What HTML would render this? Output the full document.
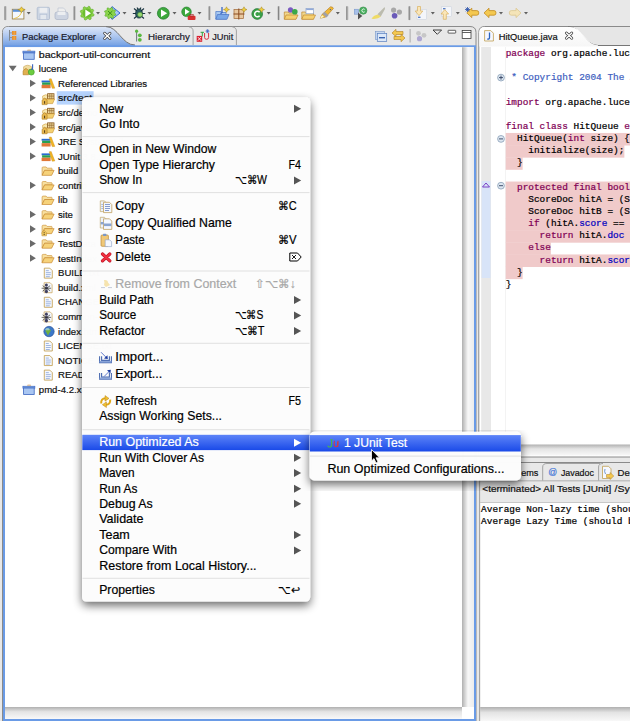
<!DOCTYPE html>
<html><head><meta charset="utf-8"><style>
html,body{margin:0;padding:0;width:630px;height:721px;overflow:hidden;background:#e8e8e8}
svg{display:block}
</style></head><body><svg width="630" height="721" viewBox="0 0 630 721"><defs>

<linearGradient id="gActTab" x1="0" y1="0" x2="0" y2="1">
 <stop offset="0" stop-color="#dde7f8"/><stop offset="0.5" stop-color="#a9c4ee"/><stop offset="1" stop-color="#6c9be2"/>
</linearGradient>
<linearGradient id="gEdTab" x1="0" y1="0" x2="0" y2="1">
 <stop offset="0" stop-color="#ffffff"/><stop offset="1" stop-color="#f6f6f6"/>
</linearGradient>
<linearGradient id="gHScroll" x1="0" y1="0" x2="0" y2="1">
 <stop offset="0" stop-color="#b0b0b0"/><stop offset="0.4" stop-color="#e4e4e4"/><stop offset="1" stop-color="#f8f8f8"/>
</linearGradient>
<linearGradient id="gVScroll" x1="0" y1="0" x2="1" y2="0">
 <stop offset="0" stop-color="#b0b0b0"/><stop offset="0.5" stop-color="#f8f8f8"/><stop offset="1" stop-color="#ececec"/>
</linearGradient>
<linearGradient id="gSel" x1="0" y1="0" x2="0" y2="1">
 <stop offset="0" stop-color="#5d84f8"/><stop offset="1" stop-color="#1a4ae8"/>
</linearGradient>
<filter id="shadow" x="-20%" y="-10%" width="140%" height="130%">
 <feGaussianBlur in="SourceAlpha" stdDeviation="5"/>
 <feOffset dy="4" result="b"/>
 <feComponentTransfer><feFuncA type="linear" slope="0.6"/></feComponentTransfer>
 <feMerge><feMergeNode/><feMergeNode in="SourceGraphic"/></feMerge>
</filter>

</defs>
<rect x="0" y="0" width="630" height="721" fill="#e8e8e8" />
<rect x="4.2" y="6" width="2.4" height="14.2" rx="1" fill="#c4c4c4"/><rect x="4.5" y="6.2" width="1.1" height="13.8" rx="0.5" fill="#858585"/>
<rect x="73.4" y="6" width="2.4" height="14.2" rx="1" fill="#c4c4c4"/><rect x="73.7" y="6.2" width="1.1" height="13.8" rx="0.5" fill="#858585"/>
<rect x="208.4" y="6" width="2.4" height="14.2" rx="1" fill="#c4c4c4"/><rect x="208.70000000000002" y="6.2" width="1.1" height="13.8" rx="0.5" fill="#858585"/>
<rect x="277.6" y="6" width="2.4" height="14.2" rx="1" fill="#c4c4c4"/><rect x="277.90000000000003" y="6.2" width="1.1" height="13.8" rx="0.5" fill="#858585"/>
<rect x="346" y="6" width="2.4" height="14.2" rx="1" fill="#c4c4c4"/><rect x="346.3" y="6.2" width="1.1" height="13.8" rx="0.5" fill="#858585"/>
<rect x="408.4" y="6" width="2.4" height="14.2" rx="1" fill="#c4c4c4"/><rect x="408.7" y="6.2" width="1.1" height="13.8" rx="0.5" fill="#858585"/>
<path d="M26.7 12 h4 l-2 2.6 z" fill="#606060"/>
<path d="M96 12 h4 l-2 2.6 z" fill="#606060"/>
<path d="M122.5 12 h4 l-2 2.6 z" fill="#606060"/>
<path d="M147.5 12 h4 l-2 2.6 z" fill="#606060"/>
<path d="M172.5 12 h4 l-2 2.6 z" fill="#606060"/>
<path d="M197.5 12 h4 l-2 2.6 z" fill="#606060"/>
<path d="M266.7 12 h4 l-2 2.6 z" fill="#606060"/>
<path d="M335.8 12 h4 l-2 2.6 z" fill="#606060"/>
<path d="M430.8 12 h4 l-2 2.6 z" fill="#606060"/>
<path d="M455.8 12 h4 l-2 2.6 z" fill="#606060"/>
<path d="M499 12 h4 l-2 2.6 z" fill="#606060"/>
<path d="M524 12 h4 l-2 2.6 z" fill="#606060"/>
<g>
<rect x="12.3" y="9.3" width="11.6" height="9.7" fill="#f4f8fc" stroke="#a08850" stroke-width="0.9"/>
<rect x="12.8" y="9.6" width="10.6" height="2.2" fill="#5a90d8"/>
<path d="M14 18.6 Q21 17 21.5 11" fill="none" stroke="#e8c040" stroke-width="0.9"/>
<path d="M21.5 6.8 L23 9 L25.2 9.6 L23 10.4 L21.5 12.6 L20 10.4 L17.8 9.6 L20 9 Z" fill="#f0d040" stroke="#a08020" stroke-width="0.5"/>
</g>
<g opacity="0.55">
<rect x="37.2" y="7.3" width="12.3" height="12.3" rx="1.2" fill="#b8c8e0" stroke="#7890b8" stroke-width="0.8"/>
<rect x="39.5" y="7.8" width="7.8" height="5" fill="#f0f4fa"/>
<rect x="40" y="14.5" width="6.8" height="5" fill="#e0e8f4" stroke="#8098c0" stroke-width="0.5"/>
</g>
<g opacity="0.55">
<path d="M58 12 V8 H63.5 L65.5 10 V12" fill="#f4f4f4" stroke="#9aa8c0" stroke-width="0.7"/>
<rect x="55" y="12" width="13" height="7.5" rx="2" fill="#b8c4dc" stroke="#8090b0" stroke-width="0.8"/>
<rect x="57.5" y="12" width="8" height="3" fill="#f0f4fa"/>
</g>
<g>
<path d="M94.06,14.59 L93.66,15.90 L91.84,16.33 L91.15,17.17 L91.07,19.03 L89.86,19.68 L88.27,18.70 L87.18,18.80 L85.81,20.06 L84.50,19.66 L84.07,17.84 L83.23,17.15 L81.37,17.07 L80.72,15.86 L81.70,14.27 L81.60,13.18 L80.34,11.81 L80.74,10.50 L82.56,10.07 L83.25,9.23 L83.33,7.37 L84.54,6.72 L86.13,7.70 L87.22,7.60 L88.59,6.34 L89.90,6.74 L90.33,8.56 L91.17,9.25 L93.03,9.33 L93.68,10.54 L92.70,12.13 L92.80,13.22 Z" fill="#8cd448" stroke="#5aa828" stroke-width="0.6" stroke-linejoin="round"/>
<circle cx="87.2" cy="13.2" r="4.6" fill="#6cbc30"/>
<path d="M85.3 9.5 L91 13.2 L85.3 16.9 Z" fill="#ffffff"/>
</g>
<g>
<path d="M112 6.6 L120 13 L112 19.4 L108 13 Z" fill="#a8c8f8" stroke="#3a6ad0" stroke-width="1"/>
<path d="M115.88,14.25 L115.55,15.34 L113.93,15.61 L113.37,16.29 L113.40,17.93 L112.40,18.47 L111.06,17.52 L110.18,17.60 L109.05,18.78 L107.96,18.45 L107.69,16.83 L107.01,16.27 L105.37,16.30 L104.83,15.30 L105.78,13.96 L105.70,13.08 L104.52,11.95 L104.85,10.86 L106.47,10.59 L107.03,9.91 L107.00,8.27 L108.00,7.73 L109.34,8.68 L110.22,8.60 L111.35,7.42 L112.44,7.75 L112.71,9.37 L113.39,9.93 L115.03,9.90 L115.57,10.90 L114.62,12.24 L114.70,13.12 Z" fill="#8ad44a" stroke="#4aa020" stroke-width="0.5" stroke-linejoin="round"/>
<path d="M108 11 L112.4 15.2 M112.4 11 L108 15.2" stroke="#3a9018" stroke-width="1"/>
</g>
<g>
<path d="M134 8.5 L137 11 M144 8.5 L141 11 M132.8 13.5 H136 M145.2 13.5 H142 M134 18.5 L137 16 M144 18.5 L141 16 M137 7.5 L138.2 9.5 M141 7.5 L139.8 9.5" stroke="#1a3440" stroke-width="1.1"/>
<ellipse cx="139" cy="13.5" rx="3.4" ry="4.6" fill="#2a5a60" stroke="#102830" stroke-width="0.7"/>
<circle cx="140" cy="14.6" r="2.4" fill="#98d870" stroke="#4a8a30" stroke-width="0.5"/>
</g>
<g>
<circle cx="163.3" cy="13.3" r="5.9" fill="#3ca83c" stroke="#1e7a2a" stroke-width="0.7"/>
<path d="M161 9.6 L167.2 13.3 L161 17 Z" fill="#ffffff"/>
</g>
<g>
<circle cx="186.5" cy="11.8" r="4.8" fill="#3ca83c" stroke="#1e7a2a" stroke-width="0.6"/>
<path d="M185 8.8 L189.6 11.8 L185 14.8 Z" fill="#ffffff"/>
<rect x="187.7" y="15.8" width="7.8" height="4.2" rx="1" fill="#d83030"/>
<rect x="190" y="14.6" width="3.2" height="1.4" fill="none" stroke="#a02020" stroke-width="0.6"/>
</g>
<g>
<path d="M215.8 11.5 H221 L222 12.5 H226 V19 H215.8 Z" fill="#a8c8f0" stroke="#4a78c8" stroke-width="0.7"/>
<path d="M217.5 14.5 H229 L227 19.3 H215.8 Z" fill="#7aa8e8" stroke="#3a64c0" stroke-width="0.6"/>
<path d="M222 7 V12.2 Q222 13.5 220.3 13.2" fill="none" stroke="#2a5ac0" stroke-width="1.2"/>
<path d="M226.5 6.8 L227.5 8.8 L229.5 9.6 L227.5 10.4 L226.5 12.4 L225.5 10.4 L223.5 9.6 L225.5 8.8 Z" fill="#f0d040" stroke="#a08020" stroke-width="0.5"/>
</g>
<g>
<rect x="234" y="9.4" width="9.6" height="9.2" fill="#e8c8a0" stroke="#a06838" stroke-width="0.7"/>
<path d="M238.8 8.5 V19.5 M233.5 14 H244.5" stroke="#8a4a20" stroke-width="1"/>
<path d="M244 6.8 L245 8.8 L247 9.6 L245 10.4 L244 12.4 L243 10.4 L241 9.6 L243 8.8 Z" fill="#f0d040" stroke="#a08020" stroke-width="0.5"/>
</g>
<g>
<circle cx="257.2" cy="14" r="5.4" fill="#3aa048" stroke="#1e7030" stroke-width="0.6"/>
<path d="M259.6 12.2 A2.8 2.8 0 1 0 259.6 15.8" fill="none" stroke="#ffffff" stroke-width="1.5"/>
<path d="M261.5 6.8 L262.5 8.8 L264.5 9.6 L262.5 10.4 L261.5 12.4 L260.5 10.4 L258.5 9.6 L260.5 8.8 Z" fill="#f0d040" stroke="#a08020" stroke-width="0.5"/>
</g>
<g>
<path d="M284.3 12 H288 L289 13 H296 V19 H284.3 Z" fill="#f0d890" stroke="#c08a30" stroke-width="0.7"/>
<path d="M286 15 H298 L296 19.3 H284.3 Z" fill="#f6d070" stroke="#c08a30" stroke-width="0.7"/>
<circle cx="290.5" cy="9.9" r="2.6" fill="#7a5ac0"/>
<circle cx="294.8" cy="11.8" r="2.8" fill="#3aa848"/>
</g>
<g>
<path d="M301.8 12 H305.5 L306.5 13 H313.5 V19 H301.8 Z" fill="#f0d890" stroke="#c08a30" stroke-width="0.7"/>
<rect x="306" y="8.3" width="7.5" height="5.5" fill="#ffffff" stroke="#8098c0" stroke-width="0.6"/>
<rect x="306.2" y="8.5" width="7.1" height="1.6" fill="#90a8d8"/>
<path d="M303.5 15 H315.5 L313.5 19.3 H301.8 Z" fill="#f6d070" stroke="#c08a30" stroke-width="0.7"/>
</g>
<g>
<path d="M320.3 18.2 L322 14.5 L330.5 6.8 Q333 6.6 333.4 8.5 L325.8 17 Z" fill="#f0b838" stroke="#b07820" stroke-width="0.6"/>
<path d="M322.5 14 L326.3 17.6 L328.5 15.4 L324.7 11.8 Z" fill="#a0a0a8"/>
<path d="M320 18.6 L322 15 L324 17 Z" fill="#fff8c0"/>
<circle cx="330.4" cy="9.6" r="0.7" fill="#4060a0"/>
</g>
<g>
<rect x="354.3" y="9.2" width="4.3" height="5" fill="#a8c0e8" stroke="#7090c8" stroke-width="0.5"/>
<path d="M358 12.6 L362.3 16 L358 19.4 Z" fill="#505050"/>
<circle cx="363.2" cy="10.6" r="3.7" fill="#4ab060" stroke="#2a8040" stroke-width="0.5"/>
<path d="M364.6 9.4 A1.6 1.6 0 1 0 364.6 11.8" fill="none" stroke="#fff" stroke-width="0.9"/>
</g>
<g opacity="0.8">
<path d="M371.5 18.8 Q374 15 378 14.5 L381 16.5 Q378 19.5 371.5 18.8 Z" fill="#f0d848"/>
<path d="M377.5 14.2 L384.6 7 L385 9 L380.8 16.6 Z" fill="#b0b0a0"/>
</g>
<g>
<circle cx="393.6" cy="10.1" r="2.6" fill="#a8a8a8"/>
<circle cx="399.4" cy="12.1" r="2.6" fill="#a8a8a8"/>
<circle cx="394.6" cy="15.8" r="2.8" fill="#6a5ab8"/>
</g>
<g>
<rect x="417" y="9.5" width="9.6" height="9.8" fill="#f4f6fa" stroke="#c8d0dc" stroke-width="0.5"/>
<rect x="418" y="16.6" width="2.5" height="1.4" fill="#5a80c8"/>
<path d="M417.5 6.5 H420.5 V11 H422.8 L419 15.7 L415.2 11 H417.5 Z" fill="#fae6b8" stroke="#d8b060" stroke-width="0.7"/>
</g>
<g>
<rect x="441.5" y="6.8" width="10" height="9.8" fill="#f4f6fa" stroke="#c8d0dc" stroke-width="0.5"/>
<rect x="443" y="8" width="2.5" height="1.4" fill="#5a80c8"/>
<path d="M443.3 19.3 H446.3 V14 H448.6 L444.8 9.6 L441 14 H443.3 Z" fill="#fae6b8" stroke="#d8b060" stroke-width="0.7"/>
</g>
<path d="M466.8 12.9 L471.8 8.2 V10.6 H476.8 Q478.8 10.6 478.8 12.9 Q478.8 15.2 476.8 15.2 H471.8 V17.6 Z" fill="#f4c850" stroke="#c08a20" stroke-width="0.8" opacity="1.0"/>
<path d="M467.5 7 V12 M465 9.5 H470 M465.7 7.7 L469.3 11.3 M469.3 7.7 L465.7 11.3" stroke="#2a50a8" stroke-width="0.8"/>
<path d="M484 12.9 L489 8.2 V10.6 H494 Q496 10.6 496 12.9 Q496 15.2 494 15.2 H489 V17.6 Z" fill="#f4c850" stroke="#c08a20" stroke-width="0.8" opacity="1.0"/>
<path d="M521 12.9 L516 8.2 V10.6 H511.3 Q509.3 10.6 509.3 12.9 Q509.3 15.2 511.3 15.2 H516 V17.6 Z" fill="#f4e4b8" stroke="#dcc890" stroke-width="0.8"/>
<path d="M2.5 721 V32.5 Q2.5 26.5 8.5 26.5 H470 Q476 26.5 476 32.5 V721" fill="#e8e8e8" stroke="#8a8a8a" stroke-width="1"/>
<path d="M188.9 26.8 Q193.1 27.5 193.1 31 V45" fill="none" stroke="#9a9a9a" stroke-width="0.9"/>
<path d="M232.2 26.8 Q236.4 27.5 236.4 31 V45" fill="none" stroke="#9a9a9a" stroke-width="0.9"/>
<path d="M3 47 V32.5 Q3 27 8.5 27 H108 C118 27 122 45 135 45 V47 Z" fill="url(#gActTab)"/>
<path d="M106 26.6 C118 26.6 122 45 135 45" fill="none" stroke="#767676" stroke-width="1"/>
<rect x="3" y="45.3" width="473" height="1.9" fill="#6a9be6" />
<rect x="3" y="47" width="2" height="674" fill="#6a9be6" />
<rect x="474" y="47" width="2" height="674" fill="#6a9be6" />
<rect x="3" y="718.8" width="473" height="2.2" fill="#6a9be6" />
<rect x="5" y="47.2" width="469" height="671.6" fill="#ffffff" />
<rect x="462" y="47.2" width="12" height="659.8" fill="url(#gVScroll)" />
<rect x="5" y="707" width="457" height="11.8" fill="url(#gHScroll)" />
<rect x="462" y="707" width="12" height="11.8" fill="#ffffff" />
<text x="22" y="39.6" font-family="Liberation Sans" font-size="9.6" fill="#1a1a2a" stroke="#1a1a2a" stroke-width="0.2" textLength="74" lengthAdjust="spacingAndGlyphs" >Package Explorer</text>
<text x="148" y="39.8" font-family="Liberation Sans" font-size="9.6" fill="#1a1a2a" stroke="#1a1a2a" stroke-width="0.2" textLength="42" lengthAdjust="spacingAndGlyphs" >Hierarchy</text>
<text x="212.2" y="39.8" font-family="Liberation Sans" font-size="9.6" fill="#1a1a2a" stroke="#1a1a2a" stroke-width="0.2" textLength="21" lengthAdjust="spacingAndGlyphs" >JUnit</text>
<g>
<rect x="375.3" y="31.6" width="9.4" height="8" fill="#c8d8f0" stroke="#7a98c8" stroke-width="0.6"/>
<rect x="377.3" y="33.4" width="9.4" height="8" fill="#dce8f8" stroke="#5a80c0" stroke-width="0.7"/>
<rect x="379" y="37" width="6" height="1.4" fill="#3a64b0"/>
<path d="M392 33 L396 29.3 V31.5 H403 V34.5 H396 V36.7 Z" fill="#f4c850" stroke="#b08020" stroke-width="0.6"/>
<path d="M405 38 L401 34.3 V36.5 H394 V39.5 H401 V41.7 Z" fill="#f4c850" stroke="#b08020" stroke-width="0.6"/>
<rect x="409.6" y="29" width="1" height="13.5" fill="#a8a8a8"/>
<g opacity="0.45"><circle cx="418.5" cy="33.3" r="2.4" fill="#a0a0a0"/><circle cx="424" cy="35.3" r="2.4" fill="#a0a0a0"/><circle cx="419.5" cy="38.7" r="2.6" fill="#6a5ab8"/></g>
<path d="M433 30 H441.6 L437.3 34.3 Z" fill="none" stroke="#303030" stroke-width="0.9"/>
<rect x="448.1" y="30.3" width="7.6" height="2.8" rx="0.4" fill="#fff" stroke="#3a3a3a" stroke-width="0.8"/>
<rect x="462.2" y="30.4" width="8.8" height="8" fill="#fff" stroke="#3a3a3a" stroke-width="0.8"/>
<rect x="462.2" y="32" width="8.8" height="0.8" fill="#3a3a3a"/>
</g>
<rect x="56.8" y="91.2" width="36.8" height="13.4" fill="#b6d4fe" />
<g transform="translate(22.6,49.5)">
<rect x="4.5" y="0" width="4" height="2" rx="1" fill="#e8c8a0"/>
<rect x="0.3" y="1.6" width="12" height="2" fill="#7aa2e0" stroke="#3a64c0" stroke-width="0.6"/>
<rect x="1" y="3.4" width="10.6" height="6.4" fill="#a9c6f2" stroke="#3a64c0" stroke-width="0.8"/>
</g>
<text x="38.8" y="57.7" font-family="Liberation Sans" font-size="9.6" fill="#111" stroke="#111" stroke-width="0.2" textLength="111.4" lengthAdjust="spacingAndGlyphs" >backport-util-concurrent</text>
<path d="M8.7 65.67000000000002 L16.7 65.67000000000002 L12.7 71.27000000000001 Z" fill="#6a6a6a"/>
<g transform="translate(22.6,63.77000000000001)">
<path d="M1 3 Q5 0 9 3 L9 6 L1 6 Z" fill="#f0dca0" stroke="#c8a050" stroke-width="0.6"/>
<path d="M0.5 7 L3.5 4.5 L6 7 L6 11 L0.5 11 Z" fill="#e0b050" stroke="#b07820" stroke-width="0.6"/>
<circle cx="8.7" cy="8.3" r="3" fill="#6ccc40" stroke="#3c9a20" stroke-width="0.6"/>
<path d="M10 0.5 V4.5 Q10 6 8.5 5.5" fill="none" stroke="#3a64c0" stroke-width="1.1"/>
</g>
<text x="38.8" y="72.27000000000001" font-family="Liberation Sans" font-size="9.6" fill="#111" stroke="#111" stroke-width="0.2" >lucene</text>
<path d="M30.0 79.64 L35.9 83.29 L30.0 86.94 Z" fill="#6a6a6a"/>
<g transform="translate(41.6,78.74000000000001)">
<rect x="0" y="1.8" width="8.5" height="1.9" fill="#2a6ad0"/>
<rect x="0.5" y="3.7" width="8.5" height="2.4" fill="#28a050"/>
<rect x="0" y="6.1" width="9" height="3.4" fill="#e07838"/>
<path d="M7.6 0.2 L9.6 0 L13.2 9.4 L10.6 9.6 Z" fill="#f2b424" stroke="#c88a10" stroke-width="0.4"/>
</g>
<text x="58.0" y="86.84" font-family="Liberation Sans" font-size="9.6" fill="#111" stroke="#111" stroke-width="0.2" >Referenced Libraries</text>
<path d="M30.0 94.21 L35.9 97.86 L30.0 101.50999999999999 Z" fill="#6a6a6a"/>
<g transform="translate(41.6,93.11)">
<path d="M1 3 Q4 0.5 7 2.5 L7 5.5 L1 5.5 Z" fill="#f8e8b0" stroke="#d0a040" stroke-width="0.6"/>
<rect x="6" y="0.6" width="6.4" height="5.2" fill="#f0dca0" stroke="#8a5a20" stroke-width="0.8"/><path d="M8.2 0.6 V5.8 M10.2 0.6 V5.8 M6 3 H12.4" stroke="#8a5a20" stroke-width="0.6"/>
<path d="M2 6 L13 6 L11 10.5 L1 10.5 Z" fill="#f4d070" stroke="#c89030" stroke-width="0.6"/>
<path d="M0.5 7 L3 5 L5.5 7 L5.5 11.5 L0.5 11.5 Z" fill="#e8b850" stroke="#b08020" stroke-width="0.6"/>
<rect x="2.6" y="8" width="0.9" height="2.6" fill="#3a2a10"/>
</g>
<text x="58.0" y="101.41" font-family="Liberation Sans" font-size="9.6" fill="#111" stroke="#111" stroke-width="0.2" textLength="34.2" lengthAdjust="spacingAndGlyphs" >src/test</text>
<path d="M30.0 108.78 L35.9 112.43 L30.0 116.08 Z" fill="#6a6a6a"/>
<g transform="translate(41.6,107.68)">
<path d="M1 3 Q4 0.5 7 2.5 L7 5.5 L1 5.5 Z" fill="#f8e8b0" stroke="#d0a040" stroke-width="0.6"/>
<rect x="6" y="0.6" width="6.4" height="5.2" fill="#f0dca0" stroke="#8a5a20" stroke-width="0.8"/><path d="M8.2 0.6 V5.8 M10.2 0.6 V5.8 M6 3 H12.4" stroke="#8a5a20" stroke-width="0.6"/>
<path d="M2 6 L13 6 L11 10.5 L1 10.5 Z" fill="#f4d070" stroke="#c89030" stroke-width="0.6"/>
<path d="M0.5 7 L3 5 L5.5 7 L5.5 11.5 L0.5 11.5 Z" fill="#e8b850" stroke="#b08020" stroke-width="0.6"/>
<rect x="2.6" y="8" width="0.9" height="2.6" fill="#3a2a10"/>
</g>
<text x="58.0" y="115.98" font-family="Liberation Sans" font-size="9.6" fill="#111" stroke="#111" stroke-width="0.2" >src/demo</text>
<path d="M30.0 123.35000000000001 L35.9 127.00000000000001 L30.0 130.65 Z" fill="#6a6a6a"/>
<g transform="translate(41.6,122.25000000000001)">
<path d="M1 3 Q4 0.5 7 2.5 L7 5.5 L1 5.5 Z" fill="#f8e8b0" stroke="#d0a040" stroke-width="0.6"/>
<rect x="6" y="0.6" width="6.4" height="5.2" fill="#f0dca0" stroke="#8a5a20" stroke-width="0.8"/><path d="M8.2 0.6 V5.8 M10.2 0.6 V5.8 M6 3 H12.4" stroke="#8a5a20" stroke-width="0.6"/>
<path d="M2 6 L13 6 L11 10.5 L1 10.5 Z" fill="#f4d070" stroke="#c89030" stroke-width="0.6"/>
<path d="M0.5 7 L3 5 L5.5 7 L5.5 11.5 L0.5 11.5 Z" fill="#e8b850" stroke="#b08020" stroke-width="0.6"/>
<rect x="2.6" y="8" width="0.9" height="2.6" fill="#3a2a10"/>
</g>
<text x="58.0" y="130.55" font-family="Liberation Sans" font-size="9.6" fill="#111" stroke="#111" stroke-width="0.2" >src/java</text>
<path d="M30.0 137.92000000000002 L35.9 141.57000000000002 L30.0 145.22000000000003 Z" fill="#6a6a6a"/>
<g transform="translate(41.6,137.02)">
<rect x="0" y="1.8" width="8.5" height="1.9" fill="#2a6ad0"/>
<rect x="0.5" y="3.7" width="8.5" height="2.4" fill="#28a050"/>
<rect x="0" y="6.1" width="9" height="3.4" fill="#e07838"/>
<path d="M7.6 0.2 L9.6 0 L13.2 9.4 L10.6 9.6 Z" fill="#f2b424" stroke="#c88a10" stroke-width="0.4"/>
</g>
<text x="58.0" y="145.12" font-family="Liberation Sans" font-size="9.6" fill="#111" stroke="#111" stroke-width="0.2" >JRE System Library</text>
<path d="M30.0 152.49 L35.9 156.14000000000001 L30.0 159.79000000000002 Z" fill="#6a6a6a"/>
<g transform="translate(41.6,151.59)">
<rect x="0" y="1.8" width="8.5" height="1.9" fill="#2a6ad0"/>
<rect x="0.5" y="3.7" width="8.5" height="2.4" fill="#28a050"/>
<rect x="0" y="6.1" width="9" height="3.4" fill="#e07838"/>
<path d="M7.6 0.2 L9.6 0 L13.2 9.4 L10.6 9.6 Z" fill="#f2b424" stroke="#c88a10" stroke-width="0.4"/>
</g>
<text x="58.0" y="159.69" font-family="Liberation Sans" font-size="9.6" fill="#111" stroke="#111" stroke-width="0.2" >JUnit 3.8.1</text>
<g transform="translate(41.6,166.35999999999999)">
<path d="M0.5 1.5 Q0.5 0.6 1.5 0.6 L4.5 0.6 L5.5 1.8 L10 1.8 Q10.5 1.8 10.5 2.5 L10.5 4 L3 4 L0.5 8.8 Z" fill="#f8e0a0" stroke="#d09840" stroke-width="0.7"/>
<path d="M3 4 L12.5 4 L10 9 L0.5 9 Z" fill="#f6d27a" stroke="#c88a30" stroke-width="0.7"/>
</g>
<text x="58.0" y="174.26" font-family="Liberation Sans" font-size="9.6" fill="#111" stroke="#111" stroke-width="0.2" >build</text>
<path d="M30.0 181.63 L35.9 185.28 L30.0 188.93 Z" fill="#6a6a6a"/>
<g transform="translate(41.6,180.92999999999998)">
<path d="M0.5 1.5 Q0.5 0.6 1.5 0.6 L4.5 0.6 L5.5 1.8 L10 1.8 Q10.5 1.8 10.5 2.5 L10.5 4 L3 4 L0.5 8.8 Z" fill="#f8e0a0" stroke="#d09840" stroke-width="0.7"/>
<path d="M3 4 L12.5 4 L10 9 L0.5 9 Z" fill="#f6d27a" stroke="#c88a30" stroke-width="0.7"/>
</g>
<text x="58.0" y="188.82999999999998" font-family="Liberation Sans" font-size="9.6" fill="#111" stroke="#111" stroke-width="0.2" >contrib</text>
<g transform="translate(41.6,195.49999999999997)">
<path d="M0.5 1.5 Q0.5 0.6 1.5 0.6 L4.5 0.6 L5.5 1.8 L10 1.8 Q10.5 1.8 10.5 2.5 L10.5 4 L3 4 L0.5 8.8 Z" fill="#f8e0a0" stroke="#d09840" stroke-width="0.7"/>
<path d="M3 4 L12.5 4 L10 9 L0.5 9 Z" fill="#f6d27a" stroke="#c88a30" stroke-width="0.7"/>
</g>
<text x="58.0" y="203.39999999999998" font-family="Liberation Sans" font-size="9.6" fill="#111" stroke="#111" stroke-width="0.2" >lib</text>
<path d="M30.0 210.77000000000004 L35.9 214.42000000000004 L30.0 218.07000000000005 Z" fill="#6a6a6a"/>
<g transform="translate(41.6,210.07000000000002)">
<path d="M0.5 1.5 Q0.5 0.6 1.5 0.6 L4.5 0.6 L5.5 1.8 L10 1.8 Q10.5 1.8 10.5 2.5 L10.5 4 L3 4 L0.5 8.8 Z" fill="#f8e0a0" stroke="#d09840" stroke-width="0.7"/>
<path d="M3 4 L12.5 4 L10 9 L0.5 9 Z" fill="#f6d27a" stroke="#c88a30" stroke-width="0.7"/>
</g>
<text x="58.0" y="217.97000000000003" font-family="Liberation Sans" font-size="9.6" fill="#111" stroke="#111" stroke-width="0.2" >site</text>
<path d="M30.0 225.34000000000003 L35.9 228.99000000000004 L30.0 232.64000000000004 Z" fill="#6a6a6a"/>
<g transform="translate(41.6,224.64000000000001)">
<path d="M0.5 1.5 Q0.5 0.6 1.5 0.6 L4.5 0.6 L5.5 1.8 L10 1.8 Q10.5 1.8 10.5 2.5 L10.5 4 L3 4 L0.5 8.8 Z" fill="#f8e0a0" stroke="#d09840" stroke-width="0.7"/>
<path d="M3 4 L12.5 4 L10 9 L0.5 9 Z" fill="#f6d27a" stroke="#c88a30" stroke-width="0.7"/>
</g><g transform="translate(41.6,224.64000000000001)">
<path d="M0.3 8 L2.6 5.6 L4.9 8 L4.9 11.2 L0.3 11.2 Z" fill="#f0c860" stroke="#b88a30" stroke-width="0.5"/>
<rect x="2.1" y="7.6" width="0.9" height="1" fill="#3a2a10"/><rect x="2.1" y="9.4" width="0.9" height="1" fill="#3a2a10"/>
</g>
<text x="58.0" y="232.54000000000002" font-family="Liberation Sans" font-size="9.6" fill="#111" stroke="#111" stroke-width="0.2" >src</text>
<path d="M30.0 239.91000000000003 L35.9 243.56000000000003 L30.0 247.21000000000004 Z" fill="#6a6a6a"/>
<g transform="translate(41.6,239.21)">
<path d="M0.5 1.5 Q0.5 0.6 1.5 0.6 L4.5 0.6 L5.5 1.8 L10 1.8 Q10.5 1.8 10.5 2.5 L10.5 4 L3 4 L0.5 8.8 Z" fill="#f8e0a0" stroke="#d09840" stroke-width="0.7"/>
<path d="M3 4 L12.5 4 L10 9 L0.5 9 Z" fill="#f6d27a" stroke="#c88a30" stroke-width="0.7"/>
</g>
<text x="58.0" y="247.11" font-family="Liberation Sans" font-size="9.6" fill="#111" stroke="#111" stroke-width="0.2" >TestData</text>
<path d="M30.0 254.48000000000002 L35.9 258.13 L30.0 261.78000000000003 Z" fill="#6a6a6a"/>
<g transform="translate(41.6,253.78)">
<path d="M0.5 1.5 Q0.5 0.6 1.5 0.6 L4.5 0.6 L5.5 1.8 L10 1.8 Q10.5 1.8 10.5 2.5 L10.5 4 L3 4 L0.5 8.8 Z" fill="#f8e0a0" stroke="#d09840" stroke-width="0.7"/>
<path d="M3 4 L12.5 4 L10 9 L0.5 9 Z" fill="#f6d27a" stroke="#c88a30" stroke-width="0.7"/>
</g>
<text x="58.0" y="261.68" font-family="Liberation Sans" font-size="9.6" fill="#111" stroke="#111" stroke-width="0.2" >testIndex</text>
<g transform="translate(43.800000000000004,267.65)">
<path d="M0.5 0.5 H6 L8.5 3 V10.5 H0.5 Z" fill="#f4f8ff" stroke="#c09a48" stroke-width="0.8"/>
<path d="M2 3 H5 M2 5 H7 M2 7 H7 M2 9 H6" stroke="#8aa4d8" stroke-width="0.8"/>
</g>
<text x="58.0" y="276.25" font-family="Liberation Sans" font-size="9.6" fill="#111" stroke="#111" stroke-width="0.2" >BUILD.txt</text>
<g transform="translate(41.6,282.21999999999997)">
<path d="M2.5 0.5 H8.5 L10.5 2.5 V10.5 H2.5 Z" fill="#f4f8ff" stroke="#c8a050" stroke-width="0.7"/>
<ellipse cx="4.8" cy="2.8" rx="1.5" ry="1.6" fill="#404060"/>
<ellipse cx="4.8" cy="6" rx="1.4" ry="1.6" fill="#505070"/>
<ellipse cx="4.8" cy="9.3" rx="1.6" ry="1.8" fill="#404060"/>
<path d="M0 6 H9.5 M1 3.5 L8.5 8.5 M1 9 L8.5 3.5" stroke="#303030" stroke-width="0.7"/>
</g>
<text x="58.0" y="290.82" font-family="Liberation Sans" font-size="9.6" fill="#111" stroke="#111" stroke-width="0.2" >build.xml</text>
<g transform="translate(43.800000000000004,296.78999999999996)">
<path d="M0.5 0.5 H6 L8.5 3 V10.5 H0.5 Z" fill="#f4f8ff" stroke="#c09a48" stroke-width="0.8"/>
<path d="M2 3 H5 M2 5 H7 M2 7 H7 M2 9 H6" stroke="#8aa4d8" stroke-width="0.8"/>
</g>
<text x="58.0" y="305.39" font-family="Liberation Sans" font-size="9.6" fill="#111" stroke="#111" stroke-width="0.2" >CHANGES.txt</text>
<g transform="translate(41.6,311.35999999999996)">
<path d="M2.5 0.5 H8.5 L10.5 2.5 V10.5 H2.5 Z" fill="#f4f8ff" stroke="#c8a050" stroke-width="0.7"/>
<ellipse cx="4.8" cy="2.8" rx="1.5" ry="1.6" fill="#404060"/>
<ellipse cx="4.8" cy="6" rx="1.4" ry="1.6" fill="#505070"/>
<ellipse cx="4.8" cy="9.3" rx="1.6" ry="1.8" fill="#404060"/>
<path d="M0 6 H9.5 M1 3.5 L8.5 8.5 M1 9 L8.5 3.5" stroke="#303030" stroke-width="0.7"/>
</g>
<text x="58.0" y="319.96" font-family="Liberation Sans" font-size="9.6" fill="#111" stroke="#111" stroke-width="0.2" >common-build.xml</text>
<g transform="translate(43.4,325.92999999999995)">
<circle cx="5.6" cy="5.6" r="5.2" fill="#3c78c8" stroke="#284c90" stroke-width="0.6"/>
<path d="M3 2.5 Q6 2 7.5 4.5 Q6 7 4.5 9.5 Q3 6 2 5 Z" fill="#70b040"/>
<ellipse cx="4" cy="3.2" rx="2" ry="1.2" fill="#a8d0f8" opacity="0.7"/>
</g>
<text x="58.0" y="334.53" font-family="Liberation Sans" font-size="9.6" fill="#111" stroke="#111" stroke-width="0.2" >index.html</text>
<g transform="translate(43.800000000000004,340.49999999999994)">
<path d="M0.5 0.5 H6 L8.5 3 V10.5 H0.5 Z" fill="#f4f8ff" stroke="#c09a48" stroke-width="0.8"/>
<path d="M2 3 H5 M2 5 H7 M2 7 H7 M2 9 H6" stroke="#8aa4d8" stroke-width="0.8"/>
</g>
<text x="58.0" y="349.09999999999997" font-family="Liberation Sans" font-size="9.6" fill="#111" stroke="#111" stroke-width="0.2" >LICENSE.txt</text>
<g transform="translate(43.800000000000004,355.07)">
<path d="M0.5 0.5 H6 L8.5 3 V10.5 H0.5 Z" fill="#f4f8ff" stroke="#c09a48" stroke-width="0.8"/>
<path d="M2 3 H5 M2 5 H7 M2 7 H7 M2 9 H6" stroke="#8aa4d8" stroke-width="0.8"/>
</g>
<text x="58.0" y="363.67" font-family="Liberation Sans" font-size="9.6" fill="#111" stroke="#111" stroke-width="0.2" >NOTICE.txt</text>
<g transform="translate(43.800000000000004,369.64)">
<path d="M0.5 0.5 H6 L8.5 3 V10.5 H0.5 Z" fill="#f4f8ff" stroke="#c09a48" stroke-width="0.8"/>
<path d="M2 3 H5 M2 5 H7 M2 7 H7 M2 9 H6" stroke="#8aa4d8" stroke-width="0.8"/>
</g>
<text x="58.0" y="378.24" font-family="Liberation Sans" font-size="9.6" fill="#111" stroke="#111" stroke-width="0.2" >README.txt</text>
<g transform="translate(22.6,384.61)">
<rect x="4.5" y="0" width="4" height="2" rx="1" fill="#e8c8a0"/>
<rect x="0.3" y="1.6" width="12" height="2" fill="#7aa2e0" stroke="#3a64c0" stroke-width="0.6"/>
<rect x="1" y="3.4" width="10.6" height="6.4" fill="#a9c6f2" stroke="#3a64c0" stroke-width="0.8"/>
</g>
<text x="38.8" y="392.81" font-family="Liberation Sans" font-size="9.6" fill="#111" stroke="#111" stroke-width="0.2" >pmd-4.2.x</text>
<path d="M478.8 457 V32.5 Q478.8 26.5 484.8 26.5 H640 V457 Z" fill="#ffffff" stroke="#8a8a8a" stroke-width="1"/>
<path d="M570 26.9 C582 26.9 586 45.3 598 45.3 H630 V27 Z" fill="#e6e6e6"/>
<path d="M568 26.6 C581 26.6 585 45.5 598 45.5 H640" fill="none" stroke="#767676" stroke-width="1"/>
<path d="M479.3 46.5 V32.5 Q479.3 27 485 27 H570 C582 27 586 45.3 598 45.3 V46.5 Z" fill="url(#gEdTab)"/>
<path d="M479.3 45 V32.5 Q479.3 27 484.8 27 H570 C582 27 586 45.3 598 45.3" fill="none"/>
<text x="498.7" y="40" font-family="Liberation Sans" font-size="9.6" fill="#111" stroke="#111" stroke-width="0.2" textLength="59" lengthAdjust="spacingAndGlyphs" >HitQueue.java</text>
<g>
<rect x="9" y="30" width="1" height="10.7" fill="#808890"/>
<rect x="10" y="32.5" width="2" height="0.8" fill="#808890"/><rect x="10" y="37.2" width="2" height="0.8" fill="#808890"/>
<rect x="12" y="31" width="4.3" height="3.9" fill="#e89030"/><rect x="12" y="36" width="4.3" height="3.9" fill="#e89030"/>
<rect x="13.8" y="31" width="0.6" height="8.9" fill="#f8c060"/>
<path d="M104.6 33.2 L110 38.6 M110 33.2 L104.6 38.6" stroke="#3a3a3a" stroke-width="2.8" stroke-linecap="round"/>
<path d="M104.6 33.2 L110 38.6 M110 33.2 L104.6 38.6" stroke="#ffffff" stroke-width="1.4" stroke-linecap="round"/>
<rect x="136.2" y="30.5" width="0.9" height="11" fill="#5a6a70"/>
<circle cx="136.6" cy="31.2" r="1.6" fill="#5ab840"/>
<circle cx="139.8" cy="35.3" r="1.9" fill="#5ab840"/><circle cx="139.8" cy="39.8" r="1.9" fill="#5ab840"/>
<rect x="196.7" y="35.9" width="5.5" height="5.9" fill="#d82030"/>
<path d="M197.8 37 L201 40.7 M201 37 L197.8 40.7" stroke="#fff" stroke-width="0.8"/>
<path d="M200.6 32.3 H204 M202.3 32.3 V36.4" stroke="#30a040" stroke-width="1"/>
<path d="M204.6 33 V37.5 Q204.6 39.3 206.6 39.3 Q208.6 39.3 208.6 37.5 V33" fill="none" stroke="#d83040" stroke-width="1"/>
<path d="M207.5 29.2 V33.2 M205.5 31.2 H209.5 M206 29.8 L209 32.6 M209 29.8 L206 32.6" stroke="#3a60c0" stroke-width="0.7"/>
<path d="M566.4 32.9 L571.8 38.3 M571.8 32.9 L566.4 38.3" stroke="#3a3a3a" stroke-width="2.8" stroke-linecap="round"/>
<path d="M566.4 32.9 L571.8 38.3 M571.8 32.9 L566.4 38.3" stroke="#ffffff" stroke-width="1.4" stroke-linecap="round"/>
<path d="M484.6 30.6 H490.8 L493.4 33.2 V41 H484.6 Z" fill="#f6f8ff" stroke="#c0a050" stroke-width="0.8"/>
<path d="M489.5 32.5 V37.5 Q489.5 39.5 487.3 39" fill="none" stroke="#2a64c0" stroke-width="1.3"/>
</g>
<rect x="481.2" y="47" width="9.8" height="397" fill="#e8e8e8" />
<rect x="505" y="47" width="0.6" height="397" fill="#ececec" />
<rect x="479.3" y="444.5" width="152" height="11" fill="url(#gHScroll)" />
<text x="505.70" y="56.0" font-family="Liberation Mono" font-size="9.4" fill="#7f0055" stroke="#7f0055" stroke-width="0.22" textLength="39.55" lengthAdjust="spacingAndGlyphs" xml:space="preserve">package</text>
<text x="550.90" y="56.0" font-family="Liberation Mono" font-size="9.4" fill="#000" stroke="#000" stroke-width="0.22" textLength="141.25" lengthAdjust="spacingAndGlyphs" xml:space="preserve">org.apache.lucene.search;</text>
<text x="511.35" y="80.3" font-family="Liberation Mono" font-size="9.4" fill="#3f5fbf" stroke="#3f5fbf" stroke-width="0.22" textLength="265.55" lengthAdjust="spacingAndGlyphs" xml:space="preserve">* Copyright 2004 The Apache Software Foundation</text>
<text x="505.70" y="104.6" font-family="Liberation Mono" font-size="9.4" fill="#7f0055" stroke="#7f0055" stroke-width="0.22" textLength="33.90" lengthAdjust="spacingAndGlyphs" xml:space="preserve">import</text>
<text x="545.25" y="104.6" font-family="Liberation Mono" font-size="9.4" fill="#000" stroke="#000" stroke-width="0.22" textLength="209.05" lengthAdjust="spacingAndGlyphs" xml:space="preserve">org.apache.lucene.util.PriorityQueue;</text>
<text x="505.70" y="128.9" font-family="Liberation Mono" font-size="9.4" fill="#7f0055" stroke="#7f0055" stroke-width="0.22" textLength="28.25" lengthAdjust="spacingAndGlyphs" xml:space="preserve">final</text>
<text x="539.60" y="128.9" font-family="Liberation Mono" font-size="9.4" fill="#7f0055" stroke="#7f0055" stroke-width="0.22" textLength="28.25" lengthAdjust="spacingAndGlyphs" xml:space="preserve">class</text>
<text x="573.50" y="128.9" font-family="Liberation Mono" font-size="9.4" fill="#000" stroke="#000" stroke-width="0.22" textLength="50.85" lengthAdjust="spacingAndGlyphs" xml:space="preserve">HitQueue </text>
<text x="624.35" y="128.9" font-family="Liberation Mono" font-size="9.4" fill="#7f0055" stroke="#7f0055" stroke-width="0.22" textLength="39.55" lengthAdjust="spacingAndGlyphs" xml:space="preserve">extends</text>
<text x="669.55" y="128.9" font-family="Liberation Mono" font-size="9.4" fill="#000" stroke="#000" stroke-width="0.22" textLength="84.75" lengthAdjust="spacingAndGlyphs" xml:space="preserve">PriorityQueue {</text>
<rect x="505.7" y="132.95000000000002" width="130" height="12.55" fill="#f0caca" />
<text x="517.00" y="141.05" font-family="Liberation Mono" font-size="9.4" fill="#000" stroke="#000" stroke-width="0.22" textLength="50.85" lengthAdjust="spacingAndGlyphs" xml:space="preserve">HitQueue(</text>
<text x="567.85" y="141.05" font-family="Liberation Mono" font-size="9.4" fill="#7f0055" stroke="#7f0055" stroke-width="0.22" textLength="16.95" lengthAdjust="spacingAndGlyphs" xml:space="preserve">int</text>
<text x="590.45" y="141.05" font-family="Liberation Mono" font-size="9.4" fill="#000" stroke="#000" stroke-width="0.22" textLength="39.55" lengthAdjust="spacingAndGlyphs" xml:space="preserve">size) {</text>
<rect x="505.7" y="145.1" width="118.65" height="12.55" fill="#f0caca" />
<text x="528.30" y="153.2" font-family="Liberation Mono" font-size="9.4" fill="#000" stroke="#000" stroke-width="0.22" textLength="96.05" lengthAdjust="spacingAndGlyphs" xml:space="preserve">initialize(size);</text>
<rect x="505.7" y="157.25000000000003" width="16.950000000000003" height="12.55" fill="#f0caca" />
<text x="517.00" y="165.35000000000002" font-family="Liberation Mono" font-size="9.4" fill="#000" stroke="#000" stroke-width="0.22" textLength="5.65" lengthAdjust="spacingAndGlyphs" xml:space="preserve">}</text>
<rect x="505.7" y="181.55" width="130" height="12.55" fill="#f0caca" />
<text x="517.00" y="189.65" font-family="Liberation Mono" font-size="9.4" fill="#7f0055" stroke="#7f0055" stroke-width="0.22" textLength="50.85" lengthAdjust="spacingAndGlyphs" xml:space="preserve">protected</text>
<text x="573.50" y="189.65" font-family="Liberation Mono" font-size="9.4" fill="#7f0055" stroke="#7f0055" stroke-width="0.22" textLength="28.25" lengthAdjust="spacingAndGlyphs" xml:space="preserve">final</text>
<text x="607.40" y="189.65" font-family="Liberation Mono" font-size="9.4" fill="#7f0055" stroke="#7f0055" stroke-width="0.22" textLength="39.55" lengthAdjust="spacingAndGlyphs" xml:space="preserve">boolean</text>
<text x="652.60" y="189.65" font-family="Liberation Mono" font-size="9.4" fill="#000" stroke="#000" stroke-width="0.22" textLength="169.50" lengthAdjust="spacingAndGlyphs" xml:space="preserve">lessThan(Object a, Object b) {</text>
<rect x="505.7" y="193.70000000000002" width="130" height="12.55" fill="#f0caca" />
<text x="528.30" y="201.8" font-family="Liberation Mono" font-size="9.4" fill="#000" stroke="#000" stroke-width="0.22" textLength="158.20" lengthAdjust="spacingAndGlyphs" xml:space="preserve">ScoreDoc hitA = (ScoreDoc)a;</text>
<rect x="505.7" y="205.85000000000002" width="130" height="12.55" fill="#f0caca" />
<text x="528.30" y="213.95000000000002" font-family="Liberation Mono" font-size="9.4" fill="#000" stroke="#000" stroke-width="0.22" textLength="158.20" lengthAdjust="spacingAndGlyphs" xml:space="preserve">ScoreDoc hitB = (ScoreDoc)b;</text>
<rect x="505.7" y="218.0" width="130" height="12.55" fill="#f0caca" />
<text x="528.30" y="226.1" font-family="Liberation Mono" font-size="9.4" fill="#7f0055" stroke="#7f0055" stroke-width="0.22" textLength="11.30" lengthAdjust="spacingAndGlyphs" xml:space="preserve">if</text>
<text x="545.25" y="226.1" font-family="Liberation Mono" font-size="9.4" fill="#000" stroke="#000" stroke-width="0.22" textLength="33.90" lengthAdjust="spacingAndGlyphs" xml:space="preserve">(hitA.</text>
<text x="579.15" y="226.1" font-family="Liberation Mono" font-size="9.4" fill="#0000c0" stroke="#0000c0" stroke-width="0.22" textLength="28.25" lengthAdjust="spacingAndGlyphs" xml:space="preserve">score</text>
<text x="613.05" y="226.1" font-family="Liberation Mono" font-size="9.4" fill="#000" stroke="#000" stroke-width="0.22" textLength="45.20" lengthAdjust="spacingAndGlyphs" xml:space="preserve">== hitB.</text>
<text x="658.25" y="226.1" font-family="Liberation Mono" font-size="9.4" fill="#0000c0" stroke="#0000c0" stroke-width="0.22" textLength="28.25" lengthAdjust="spacingAndGlyphs" xml:space="preserve">score</text>
<text x="686.50" y="226.1" font-family="Liberation Mono" font-size="9.4" fill="#000" stroke="#000" stroke-width="0.22" textLength="5.65" lengthAdjust="spacingAndGlyphs" xml:space="preserve">)</text>
<rect x="505.7" y="230.15" width="130" height="12.55" fill="#f0caca" />
<text x="539.60" y="238.25" font-family="Liberation Mono" font-size="9.4" fill="#7f0055" stroke="#7f0055" stroke-width="0.22" textLength="33.90" lengthAdjust="spacingAndGlyphs" xml:space="preserve">return</text>
<text x="579.15" y="238.25" font-family="Liberation Mono" font-size="9.4" fill="#000" stroke="#000" stroke-width="0.22" textLength="28.25" lengthAdjust="spacingAndGlyphs" xml:space="preserve">hitA.</text>
<text x="607.40" y="238.25" font-family="Liberation Mono" font-size="9.4" fill="#0000c0" stroke="#0000c0" stroke-width="0.22" textLength="16.95" lengthAdjust="spacingAndGlyphs" xml:space="preserve">doc</text>
<text x="630.00" y="238.25" font-family="Liberation Mono" font-size="9.4" fill="#000" stroke="#000" stroke-width="0.22" textLength="39.55" lengthAdjust="spacingAndGlyphs" xml:space="preserve">&gt; hitB.</text>
<text x="669.55" y="238.25" font-family="Liberation Mono" font-size="9.4" fill="#0000c0" stroke="#0000c0" stroke-width="0.22" textLength="16.95" lengthAdjust="spacingAndGlyphs" xml:space="preserve">doc</text>
<text x="686.50" y="238.25" font-family="Liberation Mono" font-size="9.4" fill="#000" stroke="#000" stroke-width="0.22" textLength="5.65" lengthAdjust="spacingAndGlyphs" xml:space="preserve">;</text>
<rect x="505.7" y="242.3" width="45.2" height="12.55" fill="#f0caca" />
<text x="528.30" y="250.4" font-family="Liberation Mono" font-size="9.4" fill="#7f0055" stroke="#7f0055" stroke-width="0.22" textLength="22.60" lengthAdjust="spacingAndGlyphs" xml:space="preserve">else</text>
<rect x="505.7" y="254.45000000000002" width="130" height="12.55" fill="#f0caca" />
<text x="539.60" y="262.55" font-family="Liberation Mono" font-size="9.4" fill="#7f0055" stroke="#7f0055" stroke-width="0.22" textLength="33.90" lengthAdjust="spacingAndGlyphs" xml:space="preserve">return</text>
<text x="579.15" y="262.55" font-family="Liberation Mono" font-size="9.4" fill="#000" stroke="#000" stroke-width="0.22" textLength="28.25" lengthAdjust="spacingAndGlyphs" xml:space="preserve">hitA.</text>
<text x="607.40" y="262.55" font-family="Liberation Mono" font-size="9.4" fill="#0000c0" stroke="#0000c0" stroke-width="0.22" textLength="28.25" lengthAdjust="spacingAndGlyphs" xml:space="preserve">score</text>
<text x="641.30" y="262.55" font-family="Liberation Mono" font-size="9.4" fill="#000" stroke="#000" stroke-width="0.22" textLength="39.55" lengthAdjust="spacingAndGlyphs" xml:space="preserve">&lt; hitB.</text>
<text x="680.85" y="262.55" font-family="Liberation Mono" font-size="9.4" fill="#0000c0" stroke="#0000c0" stroke-width="0.22" textLength="28.25" lengthAdjust="spacingAndGlyphs" xml:space="preserve">score</text>
<text x="709.10" y="262.55" font-family="Liberation Mono" font-size="9.4" fill="#000" stroke="#000" stroke-width="0.22" textLength="5.65" lengthAdjust="spacingAndGlyphs" xml:space="preserve">;</text>
<rect x="505.7" y="266.6" width="16.950000000000003" height="12.55" fill="#f0caca" />
<text x="517.00" y="274.70000000000005" font-family="Liberation Mono" font-size="9.4" fill="#000" stroke="#000" stroke-width="0.22" textLength="5.65" lengthAdjust="spacingAndGlyphs" xml:space="preserve">}</text>
<text x="505.70" y="286.85" font-family="Liberation Mono" font-size="9.4" fill="#000" stroke="#000" stroke-width="0.22" textLength="5.65" lengthAdjust="spacingAndGlyphs" xml:space="preserve">}</text>
<rect x="481.6" y="181" width="8.9" height="97" fill="#d8e4f8" />
<path d="M482.5 187 L486 183 L489.5 187 Z" fill="none" stroke="#7030c0" stroke-width="0.9"/>
<circle cx="501" cy="77.6" r="3.4" fill="#dce6f0" stroke="#8aa0b8" stroke-width="0.8"/><path d="M499 77.6 H503" stroke="#304060" stroke-width="0.9"/><path d="M501 75.6 V79.6" stroke="#304060" stroke-width="0.9"/>
<circle cx="501" cy="138.9" r="3.4" fill="#dce6f0" stroke="#8aa0b8" stroke-width="0.8"/><path d="M499 138.9 H503" stroke="#304060" stroke-width="0.9"/>
<circle cx="501" cy="185.7" r="3.4" fill="#dce6f0" stroke="#8aa0b8" stroke-width="0.8"/><path d="M499 185.7 H503" stroke="#304060" stroke-width="0.9"/>
<path d="M479.8 721 V467 Q479.8 462.5 485 462.5 H640" fill="#e8e8e8" stroke="#8a8a8a" stroke-width="1"/>
<rect x="480.3" y="480.5" width="150" height="1" fill="#9a9a9a" />
<rect x="480.3" y="481.5" width="150" height="20.5" fill="#e8e8e8" />
<rect x="480.3" y="502" width="150" height="1" fill="#c8c8c8" />
<rect x="480.3" y="503" width="150" height="204" fill="#ffffff" />
<rect x="480.3" y="707" width="150" height="14" fill="url(#gHScroll)" />
<path d="M542.7 480.5 V467 Q542.7 463.5 547 463.5 H600" fill="none" stroke="#9a9a9a" stroke-width="0.9"/>
<path d="M598.6 480.5 V467 Q598.6 463.5 603 463.5" fill="none" stroke="#9a9a9a" stroke-width="0.9"/>
<text x="521.2" y="476.2" font-family="Liberation Sans" font-size="9.6" fill="#111" stroke="#111" stroke-width="0.2" textLength="17.2" lengthAdjust="spacingAndGlyphs" >ems</text>
<text x="548.2" y="474.8" font-family="Liberation Sans" font-size="8.8" fill="#4a7ad8" stroke="#4a7ad8" stroke-width="0.2" >@</text>
<text x="560.9" y="476.2" font-family="Liberation Sans" font-size="9.6" fill="#111" stroke="#111" stroke-width="0.2" textLength="33" lengthAdjust="spacingAndGlyphs" >Javadoc</text>
<text x="617.6" y="476.2" font-family="Liberation Sans" font-size="9.6" fill="#111" stroke="#111" stroke-width="0.2" >De</text>
<path d="M602.5 466.3 H608.5 L611 468.8 V478.5 H602.5 Z" fill="#f6f8ff" stroke="#c0a050" stroke-width="0.8"/><path d="M605 469 Q604 471.5 605.5 474" fill="none" stroke="#5080c0" stroke-width="0.8"/><path d="M606.5 474.5 H610 V472.5 L613.8 476 L610 479.5 V477.5 H606.5 Z" fill="#f4c850" stroke="#b08020" stroke-width="0.5"/>
<text x="482.3" y="492" font-family="Liberation Sans" font-size="9.6" fill="#111" stroke="#111" stroke-width="0.2" textLength="129.1" lengthAdjust="spacingAndGlyphs" >&lt;terminated&gt; All Tests [JUnit]</text>
<text x="614.5" y="492" font-family="Liberation Sans" font-size="9.6" fill="#111" stroke="#111" stroke-width="0.2" textLength="38" lengthAdjust="spacingAndGlyphs" >/System</text>
<text x="481.1" y="512" font-family="Liberation Mono" font-size="9.4" fill="#000" stroke="#000" stroke-width="0.22" textLength="180.8" lengthAdjust="spacingAndGlyphs" >Average Non-lazy time (should be</text>
<text x="481.1" y="524.3" font-family="Liberation Mono" font-size="9.4" fill="#000" stroke="#000" stroke-width="0.22" textLength="158.20000000000002" lengthAdjust="spacingAndGlyphs" >Average Lazy Time (should be</text>
<g filter="url(#shadow)"><rect x="82" y="97.2" width="228.2" height="504.3" rx="4.5" fill="#fdfdfd" fill-opacity="0.985"/></g>
<rect x="82.3" y="434.8" width="227.6" height="15.3" fill="url(#gSel)" />
<text x="99.19999999999999" y="112.5" font-family="Liberation Sans" font-size="12.2" fill="#000" stroke="#000" stroke-width="0.2" textLength="24.1" lengthAdjust="spacingAndGlyphs" >New</text>
<path d="M294 104.8 L301.2 108.8 L294 112.8 Z" fill="#555"/>
<text x="99.19999999999999" y="128.3" font-family="Liberation Sans" font-size="12.2" fill="#000" stroke="#000" stroke-width="0.2" textLength="40.3" lengthAdjust="spacingAndGlyphs" >Go Into</text>
<rect x="82.5" y="136.1" width="227" height="1" fill="#e0e0e0" />
<text x="99.19999999999999" y="153.4" font-family="Liberation Sans" font-size="12.2" fill="#000" stroke="#000" stroke-width="0.2" textLength="117.2" lengthAdjust="spacingAndGlyphs" >Open in New Window</text>
<text x="99.19999999999999" y="168.8" font-family="Liberation Sans" font-size="12.2" fill="#000" stroke="#000" stroke-width="0.2" textLength="115.8" lengthAdjust="spacingAndGlyphs" >Open Type Hierarchy</text>
<text x="288.5" y="168.8" font-family="Liberation Sans" font-size="12.2" fill="#000" stroke="#000" stroke-width="0.2" textLength="12.5" lengthAdjust="spacingAndGlyphs" >F4</text>
<text x="99.19999999999999" y="184.2" font-family="Liberation Sans" font-size="12.2" fill="#000" stroke="#000" stroke-width="0.2" textLength="43.0" lengthAdjust="spacingAndGlyphs" >Show In</text>
<text x="234.5" y="184.2" font-family="Liberation Sans" font-size="12.2" fill="#000" stroke="#000" stroke-width="0.2" textLength="32.4" lengthAdjust="spacingAndGlyphs" >⌥⌘W</text>
<path d="M294 176.5 L301.2 180.5 L294 184.5 Z" fill="#555"/>
<rect x="82.5" y="192.1" width="227" height="1" fill="#e0e0e0" />
<text x="115.3" y="210.3" font-family="Liberation Sans" font-size="12.2" fill="#000" stroke="#000" stroke-width="0.2" textLength="28.8" lengthAdjust="spacingAndGlyphs" >Copy</text>
<text x="277.9" y="210.3" font-family="Liberation Sans" font-size="12.2" fill="#000" stroke="#000" stroke-width="0.2" textLength="18.7" lengthAdjust="spacingAndGlyphs" >⌘C</text>
<text x="115.3" y="227.3" font-family="Liberation Sans" font-size="12.2" fill="#000" stroke="#000" stroke-width="0.2" textLength="116.5" lengthAdjust="spacingAndGlyphs" >Copy Qualified Name</text>
<text x="115.3" y="244.0" font-family="Liberation Sans" font-size="12.2" fill="#000" stroke="#000" stroke-width="0.2" textLength="29.3" lengthAdjust="spacingAndGlyphs" >Paste</text>
<text x="277.9" y="244.0" font-family="Liberation Sans" font-size="12.2" fill="#000" stroke="#000" stroke-width="0.2" textLength="18.7" lengthAdjust="spacingAndGlyphs" >⌘V</text>
<text x="115.3" y="261.0" font-family="Liberation Sans" font-size="12.2" fill="#000" stroke="#000" stroke-width="0.2" textLength="35.5" lengthAdjust="spacingAndGlyphs" >Delete</text>
<rect x="82.5" y="270.5" width="227" height="1" fill="#e0e0e0" />
<text x="115.3" y="287.6" font-family="Liberation Sans" font-size="12.2" fill="#a8a8a8" stroke="#a8a8a8" stroke-width="0.2" textLength="121.0" lengthAdjust="spacingAndGlyphs" >Remove from Context</text>
<text x="255.2" y="287.6" font-family="Liberation Sans" font-size="12.2" fill="#a8a8a8" stroke="#a8a8a8" stroke-width="0.2" textLength="40.3" lengthAdjust="spacingAndGlyphs" >⇧⌥⌘↓</text>
<text x="99.19999999999999" y="303.8" font-family="Liberation Sans" font-size="12.2" fill="#000" stroke="#000" stroke-width="0.2" textLength="54.6" lengthAdjust="spacingAndGlyphs" >Build Path</text>
<path d="M294 296.1 L301.2 300.1 L294 304.1 Z" fill="#555"/>
<text x="99.19999999999999" y="319.2" font-family="Liberation Sans" font-size="12.2" fill="#000" stroke="#000" stroke-width="0.2" textLength="37.0" lengthAdjust="spacingAndGlyphs" >Source</text>
<text x="234.5" y="319.2" font-family="Liberation Sans" font-size="12.2" fill="#000" stroke="#000" stroke-width="0.2" textLength="28.8" lengthAdjust="spacingAndGlyphs" >⌥⌘S</text>
<path d="M294 311.5 L301.2 315.5 L294 319.5 Z" fill="#555"/>
<text x="99.19999999999999" y="334.8" font-family="Liberation Sans" font-size="12.2" fill="#000" stroke="#000" stroke-width="0.2" textLength="45.9" lengthAdjust="spacingAndGlyphs" >Refactor</text>
<text x="234.5" y="334.8" font-family="Liberation Sans" font-size="12.2" fill="#000" stroke="#000" stroke-width="0.2" textLength="30.0" lengthAdjust="spacingAndGlyphs" >⌥⌘T</text>
<path d="M294 327.1 L301.2 331.1 L294 335.1 Z" fill="#555"/>
<rect x="82.5" y="342.8" width="227" height="1" fill="#e0e0e0" />
<text x="115.3" y="361.2" font-family="Liberation Sans" font-size="12.2" fill="#000" stroke="#000" stroke-width="0.2" textLength="48.1" lengthAdjust="spacingAndGlyphs" >Import...</text>
<text x="115.3" y="378.3" font-family="Liberation Sans" font-size="12.2" fill="#000" stroke="#000" stroke-width="0.2" textLength="47.0" lengthAdjust="spacingAndGlyphs" >Export...</text>
<rect x="82.5" y="387.0" width="227" height="1" fill="#e0e0e0" />
<text x="115.3" y="404.5" font-family="Liberation Sans" font-size="12.2" fill="#000" stroke="#000" stroke-width="0.2" textLength="41.6" lengthAdjust="spacingAndGlyphs" >Refresh</text>
<text x="288.5" y="404.5" font-family="Liberation Sans" font-size="12.2" fill="#000" stroke="#000" stroke-width="0.2" textLength="12.5" lengthAdjust="spacingAndGlyphs" >F5</text>
<text x="99.19999999999999" y="420.4" font-family="Liberation Sans" font-size="12.2" fill="#000" stroke="#000" stroke-width="0.2" textLength="122.8" lengthAdjust="spacingAndGlyphs" >Assign Working Sets...</text>
<rect x="82.5" y="429.2" width="227" height="1" fill="#e0e0e0" />
<text x="99.19999999999999" y="446.4" font-family="Liberation Sans" font-size="12.2" fill="#ffffff" stroke="#ffffff" stroke-width="0.2" textLength="99.6" lengthAdjust="spacingAndGlyphs" >Run Optimized As</text>
<path d="M294 438.7 L301.2 442.7 L294 446.7 Z" fill="#ffffff"/>
<text x="99.19999999999999" y="461.5" font-family="Liberation Sans" font-size="12.2" fill="#000" stroke="#000" stroke-width="0.2" textLength="104.8" lengthAdjust="spacingAndGlyphs" >Run With Clover As</text>
<path d="M294 453.8 L301.2 457.8 L294 461.8 Z" fill="#555"/>
<text x="99.19999999999999" y="476.6" font-family="Liberation Sans" font-size="12.2" fill="#000" stroke="#000" stroke-width="0.2" textLength="35.4" lengthAdjust="spacingAndGlyphs" >Maven</text>
<path d="M294 468.90000000000003 L301.2 472.90000000000003 L294 476.90000000000003 Z" fill="#555"/>
<text x="99.19999999999999" y="492.5" font-family="Liberation Sans" font-size="12.2" fill="#000" stroke="#000" stroke-width="0.2" textLength="38.1" lengthAdjust="spacingAndGlyphs" >Run As</text>
<path d="M294 484.8 L301.2 488.8 L294 492.8 Z" fill="#555"/>
<text x="99.19999999999999" y="507.5" font-family="Liberation Sans" font-size="12.2" fill="#000" stroke="#000" stroke-width="0.2" textLength="53.5" lengthAdjust="spacingAndGlyphs" >Debug As</text>
<path d="M294 499.8 L301.2 503.8 L294 507.8 Z" fill="#555"/>
<text x="99.19999999999999" y="522.8" font-family="Liberation Sans" font-size="12.2" fill="#000" stroke="#000" stroke-width="0.2" textLength="44.3" lengthAdjust="spacingAndGlyphs" >Validate</text>
<text x="99.19999999999999" y="538.6" font-family="Liberation Sans" font-size="12.2" fill="#000" stroke="#000" stroke-width="0.2" textLength="30.6" lengthAdjust="spacingAndGlyphs" >Team</text>
<path d="M294 530.9 L301.2 534.9 L294 538.9 Z" fill="#555"/>
<text x="99.19999999999999" y="554.1" font-family="Liberation Sans" font-size="12.2" fill="#000" stroke="#000" stroke-width="0.2" textLength="77.8" lengthAdjust="spacingAndGlyphs" >Compare With</text>
<path d="M294 546.4 L301.2 550.4 L294 554.4 Z" fill="#555"/>
<text x="99.19999999999999" y="569.5" font-family="Liberation Sans" font-size="12.2" fill="#000" stroke="#000" stroke-width="0.2" textLength="157.4" lengthAdjust="spacingAndGlyphs" >Restore from Local History...</text>
<rect x="82.5" y="577.8" width="227" height="1" fill="#e0e0e0" />
<text x="99.19999999999999" y="594.1" font-family="Liberation Sans" font-size="12.2" fill="#000" stroke="#000" stroke-width="0.2" textLength="55.7" lengthAdjust="spacingAndGlyphs" >Properties</text>
<text x="277.8" y="594.1" font-family="Liberation Sans" font-size="12.2" fill="#000" stroke="#000" stroke-width="0.2" textLength="21.9" lengthAdjust="spacingAndGlyphs" >⌥↩</text>
<g>
<path d="M100.3 200.9 H104.5 L106 202.4 V211.6 H100.3 Z" fill="#eef2fa" stroke="#c0a868" stroke-width="0.7"/>
<path d="M103.5 202.3 H109.5 L111.8 204.6 V212.6 H103.5 Z" fill="#f4f8ff" stroke="#c0a060" stroke-width="0.8"/>
<path d="M105 204.5 H110 M105 206.5 H110 M105 208.5 H110 M105 210.5 H109" stroke="#6a84c0" stroke-width="0.8"/><path d="M101.3 204.5 H103 M101.3 206.5 H103 M101.3 208.5 H103" stroke="#8aa0d0" stroke-width="0.7"/>
<path d="M100.3 217.3 H104.5 L106 218.8 V228 H100.3 Z" fill="#eef2fa" stroke="#c0a868" stroke-width="0.7"/>
<path d="M103.5 218.8 H109.5 L111.8 221.1 V229.4 H103.5 Z" fill="#f4f8ff" stroke="#c0a060" stroke-width="0.8"/>
<rect x="104" y="223.5" width="7.4" height="2.6" fill="#8aa4d0"/>
<rect x="100.7" y="222" width="3" height="2.4" fill="#8aa4d0"/>
<rect x="101" y="235" width="7.4" height="11.3" rx="1" fill="#f0c878" stroke="#b88838" stroke-width="0.7"/>
<rect x="103" y="233.8" width="3.4" height="2.2" rx="0.6" fill="#7a98c8"/>
<path d="M105.2 239.8 H109.6 L111.6 241.8 V246.6 H105.2 Z" fill="#f4f8ff" stroke="#8aa0c8" stroke-width="0.6"/>
<path d="M102.5 254 L109.8 260.8 M109.8 254 L102.5 260.8" stroke="#b81020" stroke-width="3.2" stroke-linecap="round"/><path d="M102.5 254 L109.8 260.8 M109.8 254 L102.5 260.8" stroke="#f03040" stroke-width="2.2" stroke-linecap="round"/>
<g opacity="0.55"><path d="M104 280 Q108 279.5 108 282.5 L110 285 L106 287 Q103 285 104.5 283 Z" fill="#f0d070"/></g>
<path d="M101 287.6 H105 M108 287.6 H112" stroke="#b8c0d0" stroke-width="0.8"/>
<path d="M99.6 356.3 V362.6 H111.4 V356.3 M101.6 356.3 V360.4 H109.4 V356.3" fill="none" stroke="#4a6ab0" stroke-width="1.1"/>
<rect x="99.6" y="360.9" width="11.8" height="1.7" fill="#8aa4d8"/>
<path d="M101 352.2 L106.2 357.4" stroke="#3a5ac0" stroke-width="0.8"/><path d="M107.8 359 L104 358.6 L107.4 355.2 Z" fill="#1a3aa0"/>
<path d="M99.6 373 V379.3 H111.4 V373 M101.6 373 V377.1 H109.4 V373" fill="none" stroke="#4a6ab0" stroke-width="1.1"/>
<rect x="99.6" y="377.6" width="11.8" height="1.7" fill="#8aa4d8"/>
<path d="M104 376.6 L109.2 371.4" stroke="#3a5ac0" stroke-width="0.8"/><path d="M110.8 369.8 L110.4 373.6 L107 370.2 Z" fill="#1a3aa0"/>
<path d="M101.2 403.5 Q100.8 398.5 105.6 398.3" fill="none" stroke="#e0a818" stroke-width="2"/>
<path d="M105 395.6 L109 398.4 L105 401.2 Z" fill="#f0c030" stroke="#b88010" stroke-width="0.5"/>
<path d="M110.2 399.6 Q110.6 404.6 105.8 404.8" fill="none" stroke="#e0a818" stroke-width="2"/>
<path d="M106.4 407.5 L102.4 404.7 L106.4 401.9 Z" fill="#f0c030" stroke="#b88010" stroke-width="0.5"/>
</g>
<path d="M289.8 253 H297.5 L301.2 257 L297.5 261 H289.8 Z" fill="none" stroke="#000" stroke-width="1"/><path d="M292 255 L296 259 M296 255 L292 259" stroke="#000" stroke-width="0.9"/>
<g filter="url(#shadow)"><rect x="309.6" y="431.8" width="211.4" height="48.6" rx="4.5" fill="#fdfdfd" fill-opacity="0.985"/></g>
<rect x="309.8" y="435.1" width="211" height="16.4" fill="url(#gSel)" />
<text x="344" y="447.4" font-family="Liberation Sans" font-size="12.2" fill="#fff" stroke="#fff" stroke-width="0.2" textLength="63.2" lengthAdjust="spacingAndGlyphs" >1 JUnit Test</text>
<rect x="310" y="455.6" width="211" height="1" fill="#e0e0e0" />
<path d="M330.2 439.8 H332.6 M331.6 439.8 V445 Q331.6 447 329.6 447 Q328 447 327.8 445.6" fill="none" stroke="#4ab848" stroke-width="1.1"/><path d="M334.2 441.8 V444.8 Q334.2 446.8 336 446.8 Q337.8 446.8 337.8 444.8 V441.8 M334 441.3 H335 M337.5 441.3 H338.6 M337.8 441.8 V447" fill="none" stroke="#e03838" stroke-width="1"/>
<text x="327.4" y="473" font-family="Liberation Sans" font-size="12.2" fill="#000" stroke="#000" stroke-width="0.2" textLength="177" lengthAdjust="spacingAndGlyphs" >Run Optimized Configurations...</text>
<path d="M371.5 449.5 V461 L374 458.6 L376 463 L378 462 L376 457.8 L379.5 457.8 Z" fill="#000" stroke="#fff" stroke-width="0.8"/></svg></body></html>
